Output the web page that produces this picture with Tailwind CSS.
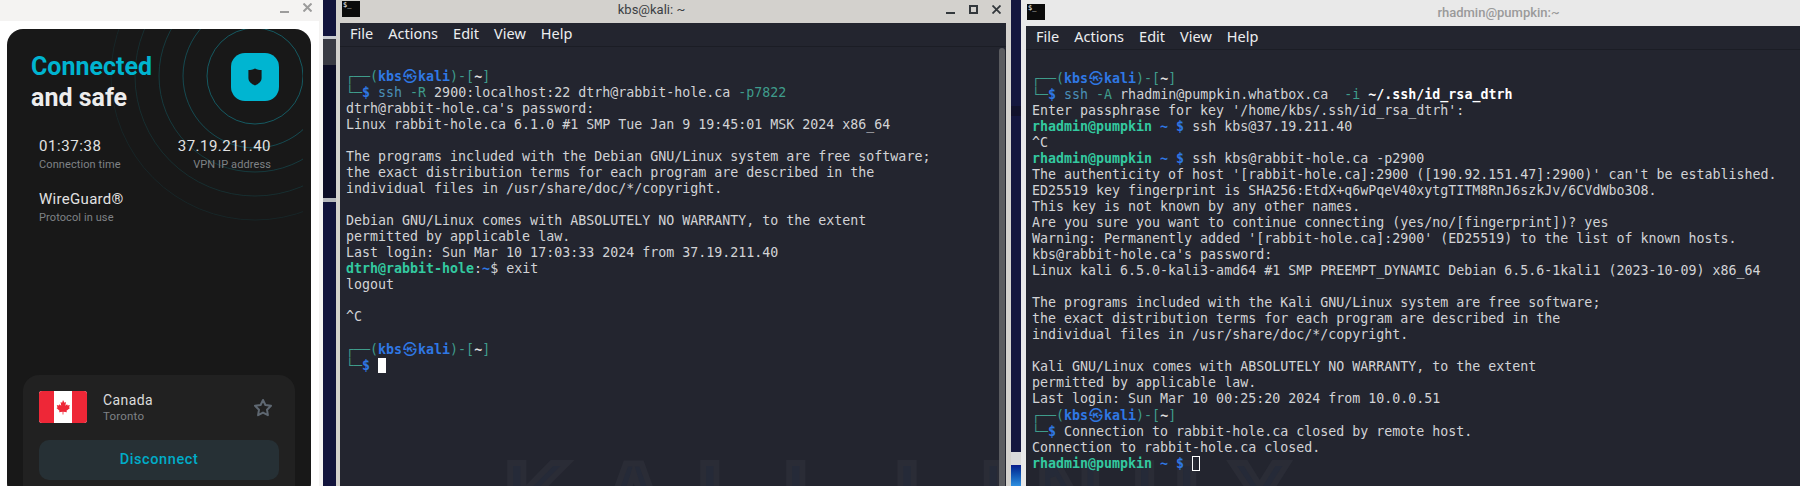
<!DOCTYPE html>
<html lang="en">
<head>
  <meta charset="UTF-8" />
  <title>VPN and terminals</title>
  <script src="https://cdn.jsdelivr.net/npm/@tailwindcss/browser@4"></script>
</head>
<body class="bg-[#10123a] overflow-hidden">
<div class="flex h-[486px] w-[1800px] overflow-hidden">

  <!-- VPN window -->
  <div class="w-[323px] shrink-0 flex flex-col bg-[#f4f3f2] font-['Roboto',sans-serif]">
    <div class="h-[21px] shrink-0 flex items-start justify-end gap-[14px] pr-[11px] pt-[3px]">
      <div class="w-[9px] h-[2px] bg-[#9c9c9c] mt-[8px]"></div>
      <svg class="w-[9px] h-[9px]" viewBox="0 0 9 9" fill="none" stroke="#9c9c9c" stroke-width="2"><path d="M0.5 0.5l8 8M8.5 0.5l-8 8"/></svg>
    </div>
    <div class="flex-1 w-[319px] bg-white pl-[7px] pt-2">
      <div class="relative w-[304px] h-[470px] bg-[#181818] rounded-[16px] overflow-hidden">
        <svg class="absolute left-0 top-0" width="296" height="220" viewBox="0 0 296 220" fill="none" stroke="#12b5c9">
          <circle cx="248" cy="47" r="48" stroke-opacity=".42"/>
          <circle cx="248" cy="47" r="72" stroke-opacity=".32"/>
          <circle cx="248" cy="47" r="96" stroke-opacity=".22"/>
          <circle cx="248" cy="47" r="120" stroke-opacity=".14"/>
          <circle cx="248" cy="47" r="144" stroke-opacity=".09"/>
        </svg>

        <div class="relative pl-6 pr-8 pt-[22px] flex justify-between">
          <h1 class="text-[25px] leading-[31px] font-bold text-[#ededed]">
            <span class="block text-[#00b4d0]">Connected</span>
            and safe
          </h1>
          <div class="w-12 h-12 rounded-[14px] bg-[#00b5d1] flex items-center justify-center mt-[2px]">
            <svg width="14" height="18" viewBox="0 0 14 18"><path fill="#181818" d="M7 0.5c2.2 1.1 4.4 1.6 6.6 1.6v8c0 3.4-3 6-6.6 7.4C3.4 16.100.4 13.500.4 10.100v-8c2.200 0 4.400-.5 6.600-1.600z"/></svg>
          </div>
        </div>

        <div class="relative grid grid-cols-2 px-8 pt-[23px]">
          <div>
            <div class="text-[15px] leading-5 tracking-[.6px] text-[#e2e2e2]">01:37:38</div>
            <div class="text-[11px] leading-4 tracking-[.1px] text-[#7f8286] mt-[1px]">Connection time</div>
          </div>
          <div class="text-right pr-[8px]">
            <div class="text-[15px] leading-5 tracking-[.45px] text-[#e2e2e2]">37.19.211.40</div>
            <div class="text-[11px] leading-4 tracking-[.1px] text-[#7f8286] mt-[1px]">VPN IP address</div>
          </div>
          <div class="mt-[16px]">
            <div class="text-[15px] leading-5 tracking-[.3px] text-[#e2e2e2]">WireGuard®</div>
            <div class="text-[11px] leading-4 tracking-[.1px] text-[#7f8286] mt-[1px]">Protocol in use</div>
          </div>
        </div>

        <div class="absolute left-4 top-[346px] w-[272px] h-[140px] bg-[#212121] rounded-[16px] p-4">
          <div class="flex items-center h-8">
            <div class="w-12 h-8 rounded-[3px] overflow-hidden flex bg-white">
              <div class="w-[15px] bg-[#ee2737]"></div>
              <div class="flex-1 flex items-center justify-center">
                <svg width="14" height="15" viewBox="0 0 14 15"><path fill="#ee2737" d="M7 0l1.500 2.800 1.500-.7-.6 3.600 1.700-1.500.5 1.300 2.200-.4-.7 2.400 1 .5L10.500 10.700l.4 1.500-3.500-.4v2.700h-.8v-2.700l-3.500.4.400-1.500L.5 8l1-.5-.7-2.400 2.200.4.500-1.300 1.700 1.500-.6-3.600 1.500.7z"/></svg>
              </div>
              <div class="w-[15px] bg-[#ee2737]"></div>
            </div>
            <div class="ml-4 flex-1">
              <div class="text-[14px] leading-[18px] tracking-[.4px] text-[#dcdcdc]">Canada</div>
              <div class="text-[11.500px] leading-[14px] tracking-[.2px] text-[#7f8286]">Toronto</div>
            </div>
            <svg class="mr-[6px]" width="20" height="19" viewBox="0 0 20 19" fill="none" stroke="#5f6872" stroke-width="2" stroke-linejoin="round"><path d="M10 2l2.400 5 5.600.8-4 3.900.9 5.500-4.900-2.600-4.900 2.600.9-5.500-4-3.900 5.600-.8z"/></svg>
          </div>
          <button class="mt-[17px] w-60 h-10 rounded-[10px] bg-[#263035] text-[14.500px] font-medium tracking-[.6px] text-[#00acc8]">Disconnect</button>
        </div>
      </div>
    </div>
  </div>

  <!-- desktop strip -->
  <div class="relative w-[13px] shrink-0 bg-[#12143c]">
    <div class="absolute left-0 top-[36px] w-full h-[3px] bg-[#c9cbd0]"></div>
    <div class="absolute left-0 top-[39px] w-full h-[26px] bg-[#3a3b44]"></div>
    <div class="absolute left-0 top-[65px] w-full h-[135px] bg-[#0d0e26]"></div>
    <div class="absolute left-0 top-[198px] w-full h-[4px] bg-[#b6b8bd]"></div>
  </div>

  <!-- first terminal -->
  <div class="w-[675px] shrink-0 flex flex-col bg-[#d3d1cd] pl-1 pr-[5px] font-['DejaVu_Sans_Mono',monospace]">
    <div class="h-[23px] shrink-0 relative flex items-center justify-center font-['Roboto',sans-serif] text-[13px] text-[#3b3f44] -ml-1 -mr-[5px]">
      <div class="absolute left-[6px] top-[1px] w-[18px] h-[16px] bg-[#0b0b0b] text-[7px] leading-[9px] text-white pl-[1px] font-['DejaVu_Sans_Mono',monospace]">$_</div>
      <span class="-ml-[44px] -mt-[3px]">kbs@kali: ~</span>
      <div class="absolute right-[10px] top-[5px] flex items-end gap-[14px]">
        <div class="w-[9px] h-[2px] bg-[#33383c]"></div>
        <div class="w-[9px] h-[9px] border-2 border-[#33383c]"></div>
        <svg width="9" height="9" viewBox="0 0 9 9" fill="none" stroke="#33383c" stroke-width="1.800"><path d="M0.500 0.500l8 8M8.500 0.500l-8 8"/></svg>
      </div>
    </div>
    <div class="relative flex-1 bg-[#23252f] flex flex-col overflow-hidden">
      <!-- wallpaper lettering showing through -->
      <div class="absolute left-[164px] top-[417px] text-[92px] leading-[110px] font-bold tracking-[30px] whitespace-nowrap text-[#252a38] [-webkit-text-stroke:6px_#2a2c36] font-['Liberation_Sans',sans-serif] pointer-events-none">KALI LI</div>
      <div class="h-6 shrink-0 border-b border-[#1b1d25] flex items-center gap-[15px] pl-[10px] pb-[1px] font-['Noto_Sans',sans-serif] text-[14.500px] text-[#eceef0]">
        <span>File</span><span>Actions</span><span>Edit</span><span>View</span><span>Help</span>
      </div>
      <div class="absolute z-10 right-0 top-[25px] bottom-0 w-[7px] bg-[#23252f] pr-[1px]">
        <div class="w-[6px] h-full bg-[#5b5c60] rounded-t-[3px]"></div>
      </div>
      <pre class="relative z-10 pl-[6px] pt-[21px] text-[13.300px] leading-4 text-[#d2d3d6] font-['DejaVu_Sans_Mono',monospace]"><span class="text-[#3f9c8c]">┌──(</span><span class="font-bold text-[#2f78e4]">kbs<span class="inline-block w-4 text-center font-normal text-[14px] leading-none font-['Noto_Sans_CJK_KR',sans-serif]">㉿</span>kali</span><span class="text-[#3f9c8c]">)-[</span><span class="font-bold text-[#e0e0e0]">~</span><span class="text-[#3f9c8c]">]</span>
<span class="text-[#3f9c8c]">└─</span><span class="font-bold text-[#2f78e4]">$</span> <span class="text-[#4a90b8]">ssh</span> <span class="text-[#3f9c8c]">-R</span> 2900:localhost:22 dtrh@rabbit-hole.ca <span class="text-[#3f9c8c]">-p7822</span>
dtrh@rabbit-hole.ca's password:
Linux rabbit-hole.ca 6.1.0 #1 SMP Tue Jan 9 19:45:01 MSK 2024 x86_64

The programs included with the Debian GNU/Linux system are free software;
the exact distribution terms for each program are described in the
individual files in /usr/share/doc/*/copyright.

Debian GNU/Linux comes with ABSOLUTELY NO WARRANTY, to the extent
permitted by applicable law.
Last login: Sun Mar 10 17:03:33 2024 from 37.19.211.40
<span class="font-bold text-[#33c9a0]">dtrh@rabbit-hole</span>:<span class="font-bold text-[#2f78e4]">~</span>$ exit
logout

^C

<span class="text-[#3f9c8c]">┌──(</span><span class="font-bold text-[#2f78e4]">kbs<span class="inline-block w-4 text-center font-normal text-[14px] leading-none font-['Noto_Sans_CJK_KR',sans-serif]">㉿</span>kali</span><span class="text-[#3f9c8c]">)-[</span><span class="font-bold text-[#e0e0e0]">~</span><span class="text-[#3f9c8c]">]</span>
<span class="text-[#3f9c8c]">└─</span><span class="font-bold text-[#2f78e4]">$</span> <span class="inline-block w-2 h-[15px] align-[-3px] bg-white"></span></pre>
    </div>
  </div>

  <!-- desktop strip -->
  <div class="relative w-[10px] shrink-0 bg-[#15173f]">
    <div class="absolute left-0 top-[106px] w-full h-[10px] bg-[#12122c]"></div>
    <div class="absolute left-0 top-[452px] w-full h-[13px] bg-[#d9d9d9]"></div>
    <div class="absolute left-0 top-[465px] w-full h-[21px] bg-gradient-to-b from-[#0a1a8a] to-[#2f8fe0]"></div>
  </div>

  <!-- second terminal -->
  <div class="flex-1 flex flex-col bg-[#e9e9e9] pl-[5px] font-['DejaVu_Sans_Mono',monospace]">
    <div class="h-[26px] shrink-0 relative flex items-center justify-center font-['Roboto',sans-serif] text-[13px] font-medium text-[#9a9a9a] -ml-[5px]">
      <div class="absolute left-[6px] top-[4px] w-[18px] h-[16px] bg-[#0b0b0b] text-[7px] leading-[9px] text-white pl-[1px] font-['DejaVu_Sans_Mono',monospace]">$_</div>
      <span class="ml-[176px]">rhadmin@pumpkin:~</span>
    </div>
    <div class="relative flex-1 bg-[#23252f] flex flex-col overflow-hidden">
      <!-- wallpaper lettering showing through -->
      <div class="absolute left-[10px] top-[414px] text-[92px] leading-[110px] font-bold tracking-[30px] whitespace-nowrap text-[#252a38] [-webkit-text-stroke:6px_#2a2c36] font-['Liberation_Sans',sans-serif] pointer-events-none">NUX</div>
      <div class="h-6 shrink-0 border-b border-[#1b1d25] flex items-center gap-[15px] pl-[10px] pb-[1px] font-['Noto_Sans',sans-serif] text-[14.500px] text-[#eceef0]">
        <span>File</span><span>Actions</span><span>Edit</span><span>View</span><span>Help</span>
      </div>
      <pre class="relative z-10 pl-[6px] pt-[20px] text-[13.300px] leading-4 text-[#d2d3d6] font-['DejaVu_Sans_Mono',monospace]"><span class="text-[#3f9c8c]">┌──(</span><span class="font-bold text-[#2f78e4]">kbs<span class="inline-block w-4 text-center font-normal text-[14px] leading-none font-['Noto_Sans_CJK_KR',sans-serif]">㉿</span>kali</span><span class="text-[#3f9c8c]">)-[</span><span class="font-bold text-[#e0e0e0]">~</span><span class="text-[#3f9c8c]">]</span>
<span class="text-[#3f9c8c]">└─</span><span class="font-bold text-[#2f78e4]">$</span> <span class="text-[#4a90b8]">ssh</span> <span class="text-[#3f9c8c]">-A</span> rhadmin@pumpkin.whatbox.ca  <span class="text-[#3f9c8c]">-i</span> <span class="font-bold text-white">~/.ssh/id_rsa_dtrh</span>
Enter passphrase for key '/home/kbs/.ssh/id_rsa_dtrh':
<span class="font-bold text-[#33c9a0]">rhadmin@pumpkin</span> <span class="font-bold text-[#2f78e4]">~ $</span> ssh kbs@37.19.211.40
^C
<span class="font-bold text-[#33c9a0]">rhadmin@pumpkin</span> <span class="font-bold text-[#2f78e4]">~ $</span> ssh kbs@rabbit-hole.ca -p2900
The authenticity of host '[rabbit-hole.ca]:2900 ([190.92.151.47]:2900)' can't be established.
ED25519 key fingerprint is SHA256:EtdX+q6wPqeV40xytgTITM8RnJ6szkJv/6CVdWbo3O8.
This key is not known by any other names.
Are you sure you want to continue connecting (yes/no/[fingerprint])? yes
Warning: Permanently added '[rabbit-hole.ca]:2900' (ED25519) to the list of known hosts.
kbs@rabbit-hole.ca's password:
Linux kali 6.5.0-kali3-amd64 #1 SMP PREEMPT_DYNAMIC Debian 6.5.6-1kali1 (2023-10-09) x86_64

The programs included with the Kali GNU/Linux system are free software;
the exact distribution terms for each program are described in the
individual files in /usr/share/doc/*/copyright.

Kali GNU/Linux comes with ABSOLUTELY NO WARRANTY, to the extent
permitted by applicable law.
Last login: Sun Mar 10 00:25:20 2024 from 10.0.0.51
<span class="text-[#3f9c8c]">┌──(</span><span class="font-bold text-[#2f78e4]">kbs<span class="inline-block w-4 text-center font-normal text-[14px] leading-none font-['Noto_Sans_CJK_KR',sans-serif]">㉿</span>kali</span><span class="text-[#3f9c8c]">)-[</span><span class="font-bold text-[#e0e0e0]">~</span><span class="text-[#3f9c8c]">]</span>
<span class="text-[#3f9c8c]">└─</span><span class="font-bold text-[#2f78e4]">$</span> Connection to rabbit-hole.ca closed by remote host.
Connection to rabbit-hole.ca closed.
<span class="font-bold text-[#33c9a0]">rhadmin@pumpkin</span> <span class="font-bold text-[#2f78e4]">~ $</span> <span class="inline-block w-2 h-[15px] align-[-3px] border border-white"></span></pre>
    </div>
  </div>
</div>
</body>
</html>
